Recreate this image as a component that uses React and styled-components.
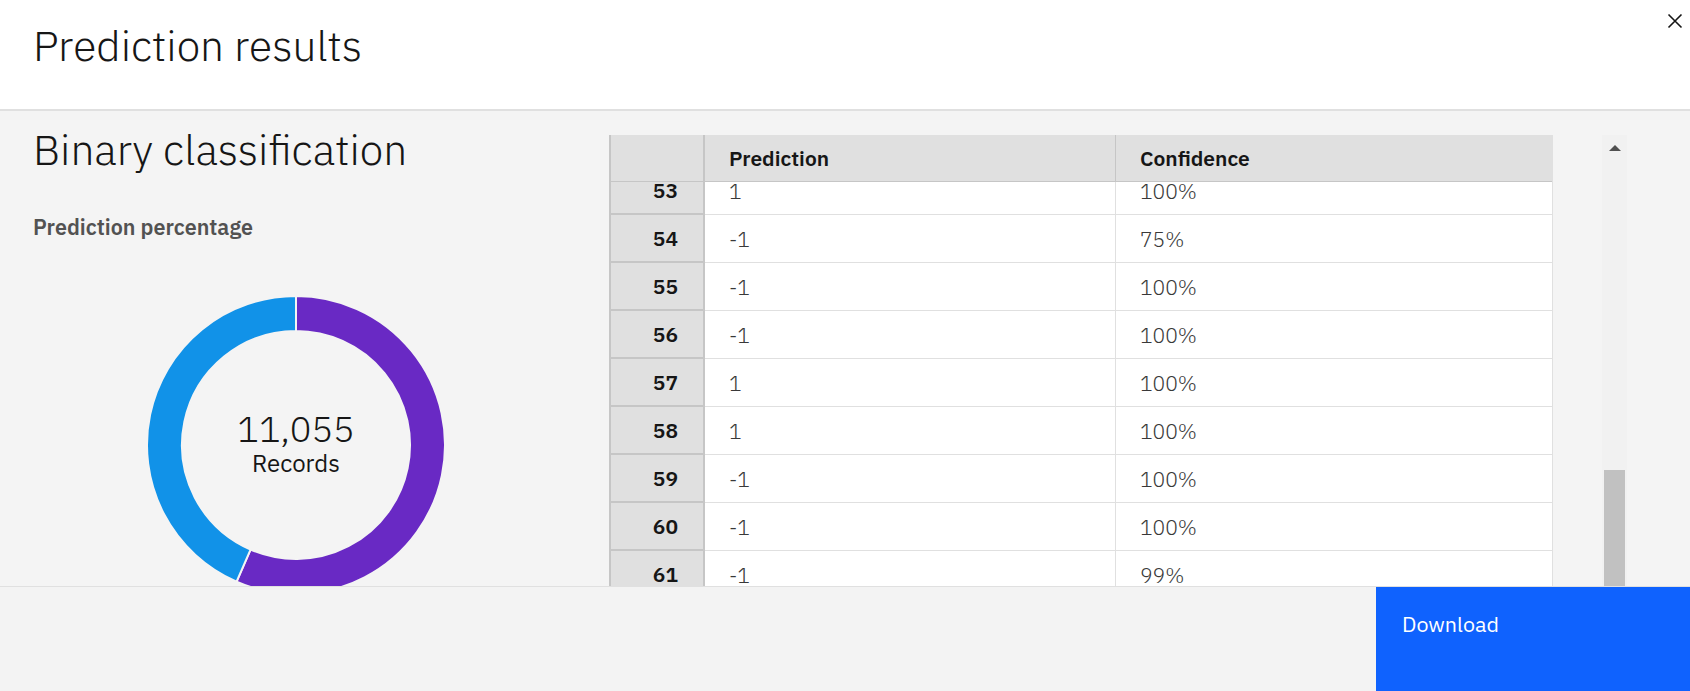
import React from 'react';
import styled, { createGlobalStyle } from 'styled-components';

const GlobalStyle = createGlobalStyle`
  * { box-sizing: border-box; }
  html, body, #root { margin: 0; padding: 0; height: 100%; }
  body {
    font-family: 'IBM Plex Sans', 'Open Sans', sans-serif;
    color: #161616;
    overflow: hidden;
  }
`;

const Modal = styled.div`
  display: flex;
  flex-direction: column;
  height: 100vh;
  background: #f4f4f4;
`;

const Header = styled.header`
  display: flex;
  justify-content: space-between;
  align-items: flex-start;
  height: 111px;
  flex-shrink: 0;
  background: #fff;
  border-bottom: 2px solid #e0e0e0;
  padding: 0 6px 0 33px;
`;

const Title = styled.h1`
  margin: 20px 0 0;
  font-size: 42.5px;
  font-weight: 300;
  line-height: 1.2;
  color: #161616;
`;

const CloseButton = styled.button`
  margin-top: 12px;
  width: 18px;
  height: 18px;
  padding: 0;
  border: none;
  background: none;
  display: flex;
  align-items: center;
  justify-content: center;
`;

const Body = styled.main`
  flex: 1;
  min-height: 0;
  display: flex;
  overflow: hidden;
`;

const Summary = styled.section`
  width: 609px;
  flex-shrink: 0;
  padding: 13px 50px 0 33px;
  display: flex;
  flex-direction: column;
`;

const SectionTitle = styled.h2`
  margin: 0;
  font-size: 42.5px;
  font-weight: 300;
  line-height: 1.2;
`;

const Label = styled.h3`
  margin: 40px 0 0;
  font-size: 21.5px;
  font-weight: 600;
  line-height: 1.2;
  color: #525252;
`;

const ChartWrap = styled.div`
  margin-top: 54px;
  display: grid;
  justify-items: center;
  align-items: center;
`;

const ChartLayer = styled.div`
  grid-area: 1 / 1;
  display: flex;
  flex-direction: column;
  align-items: center;
`;

const Total = styled.span`
  font-size: 36px;
  font-weight: 300;
  line-height: 1.1;
  margin-top: -3px;
`;

const TotalLabel = styled.span`
  font-size: 24px;
  font-weight: 400;
  line-height: 1.2;
`;

const TableArea = styled.section`
  display: flex;
  align-items: flex-start;
  padding-top: 24px;
`;

const Table = styled.div`
  width: 944px;
  border-left: 2px solid #c6c6c6;
  border-right: 1px solid #e0e0e0;
`;

const Row = styled.div`
  display: grid;
  grid-template-columns: 94px 411px 1fr;
  height: ${(p) => (p.$head ? 47 : 48)}px;
`;

const Cell = styled.div`
  display: flex;
  align-items: center;
  padding: 0 24px;
  font-size: 21px;
  background: ${(p) => (p.$head ? '#e0e0e0' : '#fff')};
  color: ${(p) => (p.$head ? '#161616' : '#393939')};
  font-weight: ${(p) => (p.$head ? 600 : 300)};
  border-bottom: 1px solid ${(p) => (p.$head ? '#c6c6c6' : '#e0e0e0')};
  border-right: ${(p) => (p.$last ? 'none' : `1px solid ${p.$head ? '#c6c6c6' : '#e0e0e0'}`)};
`;

const IndexCell = styled.div`
  display: flex;
  align-items: center;
  justify-content: flex-end;
  padding-right: 25px;
  font-size: 21px;
  font-weight: 600;
  background: #e0e0e0;
  border-right: 2px solid #c6c6c6;
  border-bottom: ${(p) => (p.$head ? '1px' : '2px')} solid #c6c6c6;
`;

const RowsWindow = styled.div`
  height: 420px;
  overflow: hidden;
`;

const RowsScroll = styled.div`
  margin-top: -15px;
`;

const ScrollTrack = styled.div`
  margin-left: 49px;
  width: 25px;
  height: 480px;
  background: #f1f1f1;
  display: flex;
  flex-direction: column;
  align-items: center;
`;

const ScrollArrow = styled.div`
  margin-top: 10px;
  width: 0;
  height: 0;
  border-left: 6px solid transparent;
  border-right: 6px solid transparent;
  border-bottom: 6px solid #505050;
`;

const ScrollThumb = styled.div`
  margin-top: 319px;
  width: 21px;
  flex: 1;
  background: #c1c1c1;
`;

const Footer = styled.footer`
  height: 105px;
  flex-shrink: 0;
  display: flex;
  justify-content: flex-end;
  background: #f3f3f3;
  border-top: 1px solid #e0e0e0;
`;

const DownloadButton = styled.button`
  width: 314px;
  height: 100%;
  border: none;
  background: #0f62fe;
  color: #fff;
  font-family: inherit;
  font-size: 21.5px;
  line-height: 1.2;
  text-align: left;
  display: flex;
  align-items: flex-start;
  padding: 25px 26px;
`;

const rows = [
  [53, '1', '100%'],
  [54, '-1', '75%'],
  [55, '-1', '100%'],
  [56, '-1', '100%'],
  [57, '1', '100%'],
  [58, '1', '100%'],
  [59, '-1', '100%'],
  [60, '-1', '100%'],
  [61, '-1', '99%'],
];

const pt = (cx, cy, rad, a) => {
  const t = (a * Math.PI) / 180;
  return [cx + rad * Math.sin(t), cy - rad * Math.cos(t)];
};

const sector = (cx, cy, R, r, a0, a1) => {
  const large = a1 - a0 > 180 ? 1 : 0;
  const [x0, y0] = pt(cx, cy, R, a0);
  const [x1, y1] = pt(cx, cy, R, a1);
  const [x2, y2] = pt(cx, cy, r, a1);
  const [x3, y3] = pt(cx, cy, r, a0);
  return `M${x0} ${y0} A${R} ${R} 0 ${large} 1 ${x1} ${y1} L${x2} ${y2} A${r} ${r} 0 ${large} 0 ${x3} ${y3} Z`;
};

const Donut = () => (
  <svg width="300" height="300" viewBox="0 0 300 300" style={{ gridArea: '1 / 1' }}>
    <path d={sector(150, 150, 149, 114, 0, 203.5)} fill="#6929c4" stroke="#f4f4f4" strokeWidth="2" />
    <path d={sector(150, 150, 149, 114, 203.5, 360)} fill="#1192e8" stroke="#f4f4f4" strokeWidth="2" />
  </svg>
);

export default function App() {
  return (
    <Modal>
      <GlobalStyle />
      <Header>
        <Title>Prediction results</Title>
        <CloseButton aria-label="Close">
          <svg width="16" height="16" viewBox="0 0 16 16">
            <path d="M1.5 1.5 L14.5 14.5 M14.5 1.5 L1.5 14.5" stroke="#161616" strokeWidth="1.6" />
          </svg>
        </CloseButton>
      </Header>
      <Body>
        <Summary>
          <SectionTitle>Binary classification</SectionTitle>
          <Label>Prediction percentage</Label>
          <ChartWrap>
            <Donut />
            <ChartLayer>
              <Total>11,055</Total>
              <TotalLabel>Records</TotalLabel>
            </ChartLayer>
          </ChartWrap>
        </Summary>
        <TableArea>
          <Table>
            <Row $head>
              <IndexCell $head />
              <Cell $head>Prediction</Cell>
              <Cell $head $last>Confidence</Cell>
            </Row>
            <RowsWindow>
              <RowsScroll>
                {rows.map(([n, p, c]) => (
                  <Row key={n}>
                    <IndexCell>{n}</IndexCell>
                    <Cell>{p}</Cell>
                    <Cell $last>{c}</Cell>
                  </Row>
                ))}
              </RowsScroll>
            </RowsWindow>
          </Table>
          <ScrollTrack>
            <ScrollArrow />
            <ScrollThumb />
          </ScrollTrack>
        </TableArea>
      </Body>
      <Footer>
        <DownloadButton>Download</DownloadButton>
      </Footer>
    </Modal>
  );
}
